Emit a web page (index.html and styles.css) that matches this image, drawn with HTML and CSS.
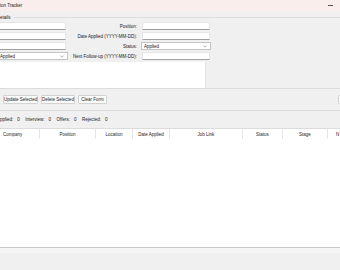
FILE: index.html
```html
<!DOCTYPE html>
<html lang="en">
<head>
  <meta charset="UTF-8">
  <meta name="viewport" content="width=device-width, initial-scale=1.0">
  <title>Job Application Tracker</title>
  <link rel="stylesheet" href="styles.css">
</head>
<body>

<div class="titlebar">
  <span class="title">ion Tracker</span>
  <span class="min"></span>
</div>

<div class="frame">
  <div class="frame-head">
    <span>etails</span>
    <span class="rule"></span>
  </div>

  <div class="form">
    <div class="entry"></div>
    <div class="label">Position:</div>
    <div class="entry right"></div>

    <div class="entry"></div>
    <div class="label">Date Applied (YYYY-MM-DD):</div>
    <div class="entry right"></div>

    <div class="entry"></div>
    <div class="label">Status:</div>
    <div class="combo right">
      <span>Applied</span>
      <svg width="4" height="3" viewBox="0 0 4 3"><path d="M0.5 0.8 L2 2.2 L3.5 0.8" fill="none" stroke="#777" stroke-width="0.6"/></svg>
    </div>

    <div class="combo">
      <span>Applied</span>
      <svg width="4" height="3" viewBox="0 0 4 3"><path d="M0.5 0.8 L2 2.2 L3.5 0.8" fill="none" stroke="#777" stroke-width="0.6"/></svg>
    </div>
    <div class="label">Next Follow-up (YYYY-MM-DD):</div>
    <div class="entry right"></div>
  </div>

  <div class="notes"></div>
</div>

<div class="actions">
  <button class="btn w-update">Update Selected</button>
  <button class="btn w-delete">Delete Selected</button>
  <button class="btn w-clear">Clear Form</button>
  <button class="btn w-more" aria-label="Export"></button>
</div>

<div class="stats">
  <span>pplied:</span><span class="num">0</span>
  <span>Interview:</span><span class="num">0</span>
  <span>Offers:</span><span class="num">0</span>
  <span>Rejected:</span><span class="num">0</span>
</div>

<div class="tree">
  <div class="head">
    <div class="col first">Company</div>
    <div class="col">Position</div>
    <div class="col">Location</div>
    <div class="col">Date Applied</div>
    <div class="col">Job Link</div>
    <div class="col">Status</div>
    <div class="col">Stage</div>
    <div class="col last">N</div>
  </div>
  <div class="rows"></div>
</div>

<div class="hscroll"></div>

</body>
</html>
```

FILE: styles.css
```css
body {
  margin: 0;
  width: 340px;
  height: 270px;
  overflow: hidden;
  background: #f0f0f0;
  font-family: "Liberation Sans", Arial, sans-serif;
  font-size: 4.5px;
  color: #1b1b1b;
}

.titlebar {
  height: 11px;
  background: #f9eeeb;
  display: flex;
  align-items: center;
  justify-content: space-between;
  padding-right: 7px;
}

.min {
  width: 5px;
  height: 1px;
  background: #555;
}

.frame {
  border-bottom: 1px solid #dcdcdc;
}

.frame-head {
  margin-top: 3px;
  height: 7px;
  display: flex;
  align-items: center;
}

.frame-head .rule {
  flex: 1;
  height: 1px;
  background: #dcdcdc;
  margin-left: 3px;
}

.form {
  display: grid;
  grid-template-columns: 69px 72px 72px;
  grid-auto-rows: 10px;
  align-items: center;
}

.label {
  text-align: right;
  padding-right: 4px;
  white-space: nowrap;
}

.entry {
  box-sizing: border-box;
  width: 66px;
  height: 8px;
  background: #fff;
  border: 1px solid #e6e6e6;
  border-left: none;
  border-bottom-color: #a0a0a0;
}

.entry.right {
  margin-left: 1px;
  width: 68px;
  border-left: 1px solid #e6e6e6;
}

.combo {
  box-sizing: border-box;
  width: 68px;
  height: 8px;
  background: #fff;
  border: 1px solid #c4c4c4;
  border-left: none;
  display: flex;
  align-items: center;
  justify-content: space-between;
  padding: 0 3px 0 0;
}

.combo.right {
  width: 70px;
  padding-left: 2px;
  border-left: 1px solid #c4c4c4;
}

.notes {
  margin-top: 1px;
  width: 206px;
  height: 26px;
  background: #fff;
  box-sizing: border-box;
  border-right: 1px solid #e2e2e2;
}

.actions {
  padding-top: 6px;
  height: 15px;
  border-bottom: 1px solid #dcdcdc;
  display: flex;
  align-items: flex-start;
  gap: 3px;
  padding-left: 3px;
  overflow: hidden;
}

.btn {
  flex-shrink: 0;
  box-sizing: border-box;
  height: 9px;
  padding: 0;
  font: inherit;
  color: inherit;
  white-space: nowrap;
  background: #fbfbfb;
  border: 1px solid #d2d2d2;
  border-radius: 1px;
}

.w-update { width: 35px; }
.w-delete { width: 34px; }
.w-clear { width: 29px; }
.w-more { width: 30px; margin-left: 228px; }

.stats {
  height: 17px;
  display: flex;
  align-items: center;
  padding-bottom: 1px;
  box-sizing: border-box;
  white-space: nowrap;
}

.stats .num {
  margin: 0 5.5px 0 4px;
}

.tree {
  border-top: 1px solid #dcdcdc;
  border-bottom: 1px solid #c8c8c8;
  background: #fff;
}

.head {
  display: grid;
  grid-template-columns: 40px 56px 37px 37px 73px 40px 45px 1fr;
  height: 10px;
  overflow: hidden;
}

.col {
  display: flex;
  align-items: center;
  justify-content: center;
  border-right: 1px solid #e5e5e5;
  white-space: nowrap;
}

.col.first {
  justify-content: flex-start;
  padding-left: 3px;
}

.col.last {
  justify-content: flex-start;
  padding-left: 8px;
  border-right: none;
}

.rows {
  height: 108px;
}

.hscroll {
  height: 22px;
  background: linear-gradient(#f4f4f4 0 5px, #f0f0f0 5px);
}
```
